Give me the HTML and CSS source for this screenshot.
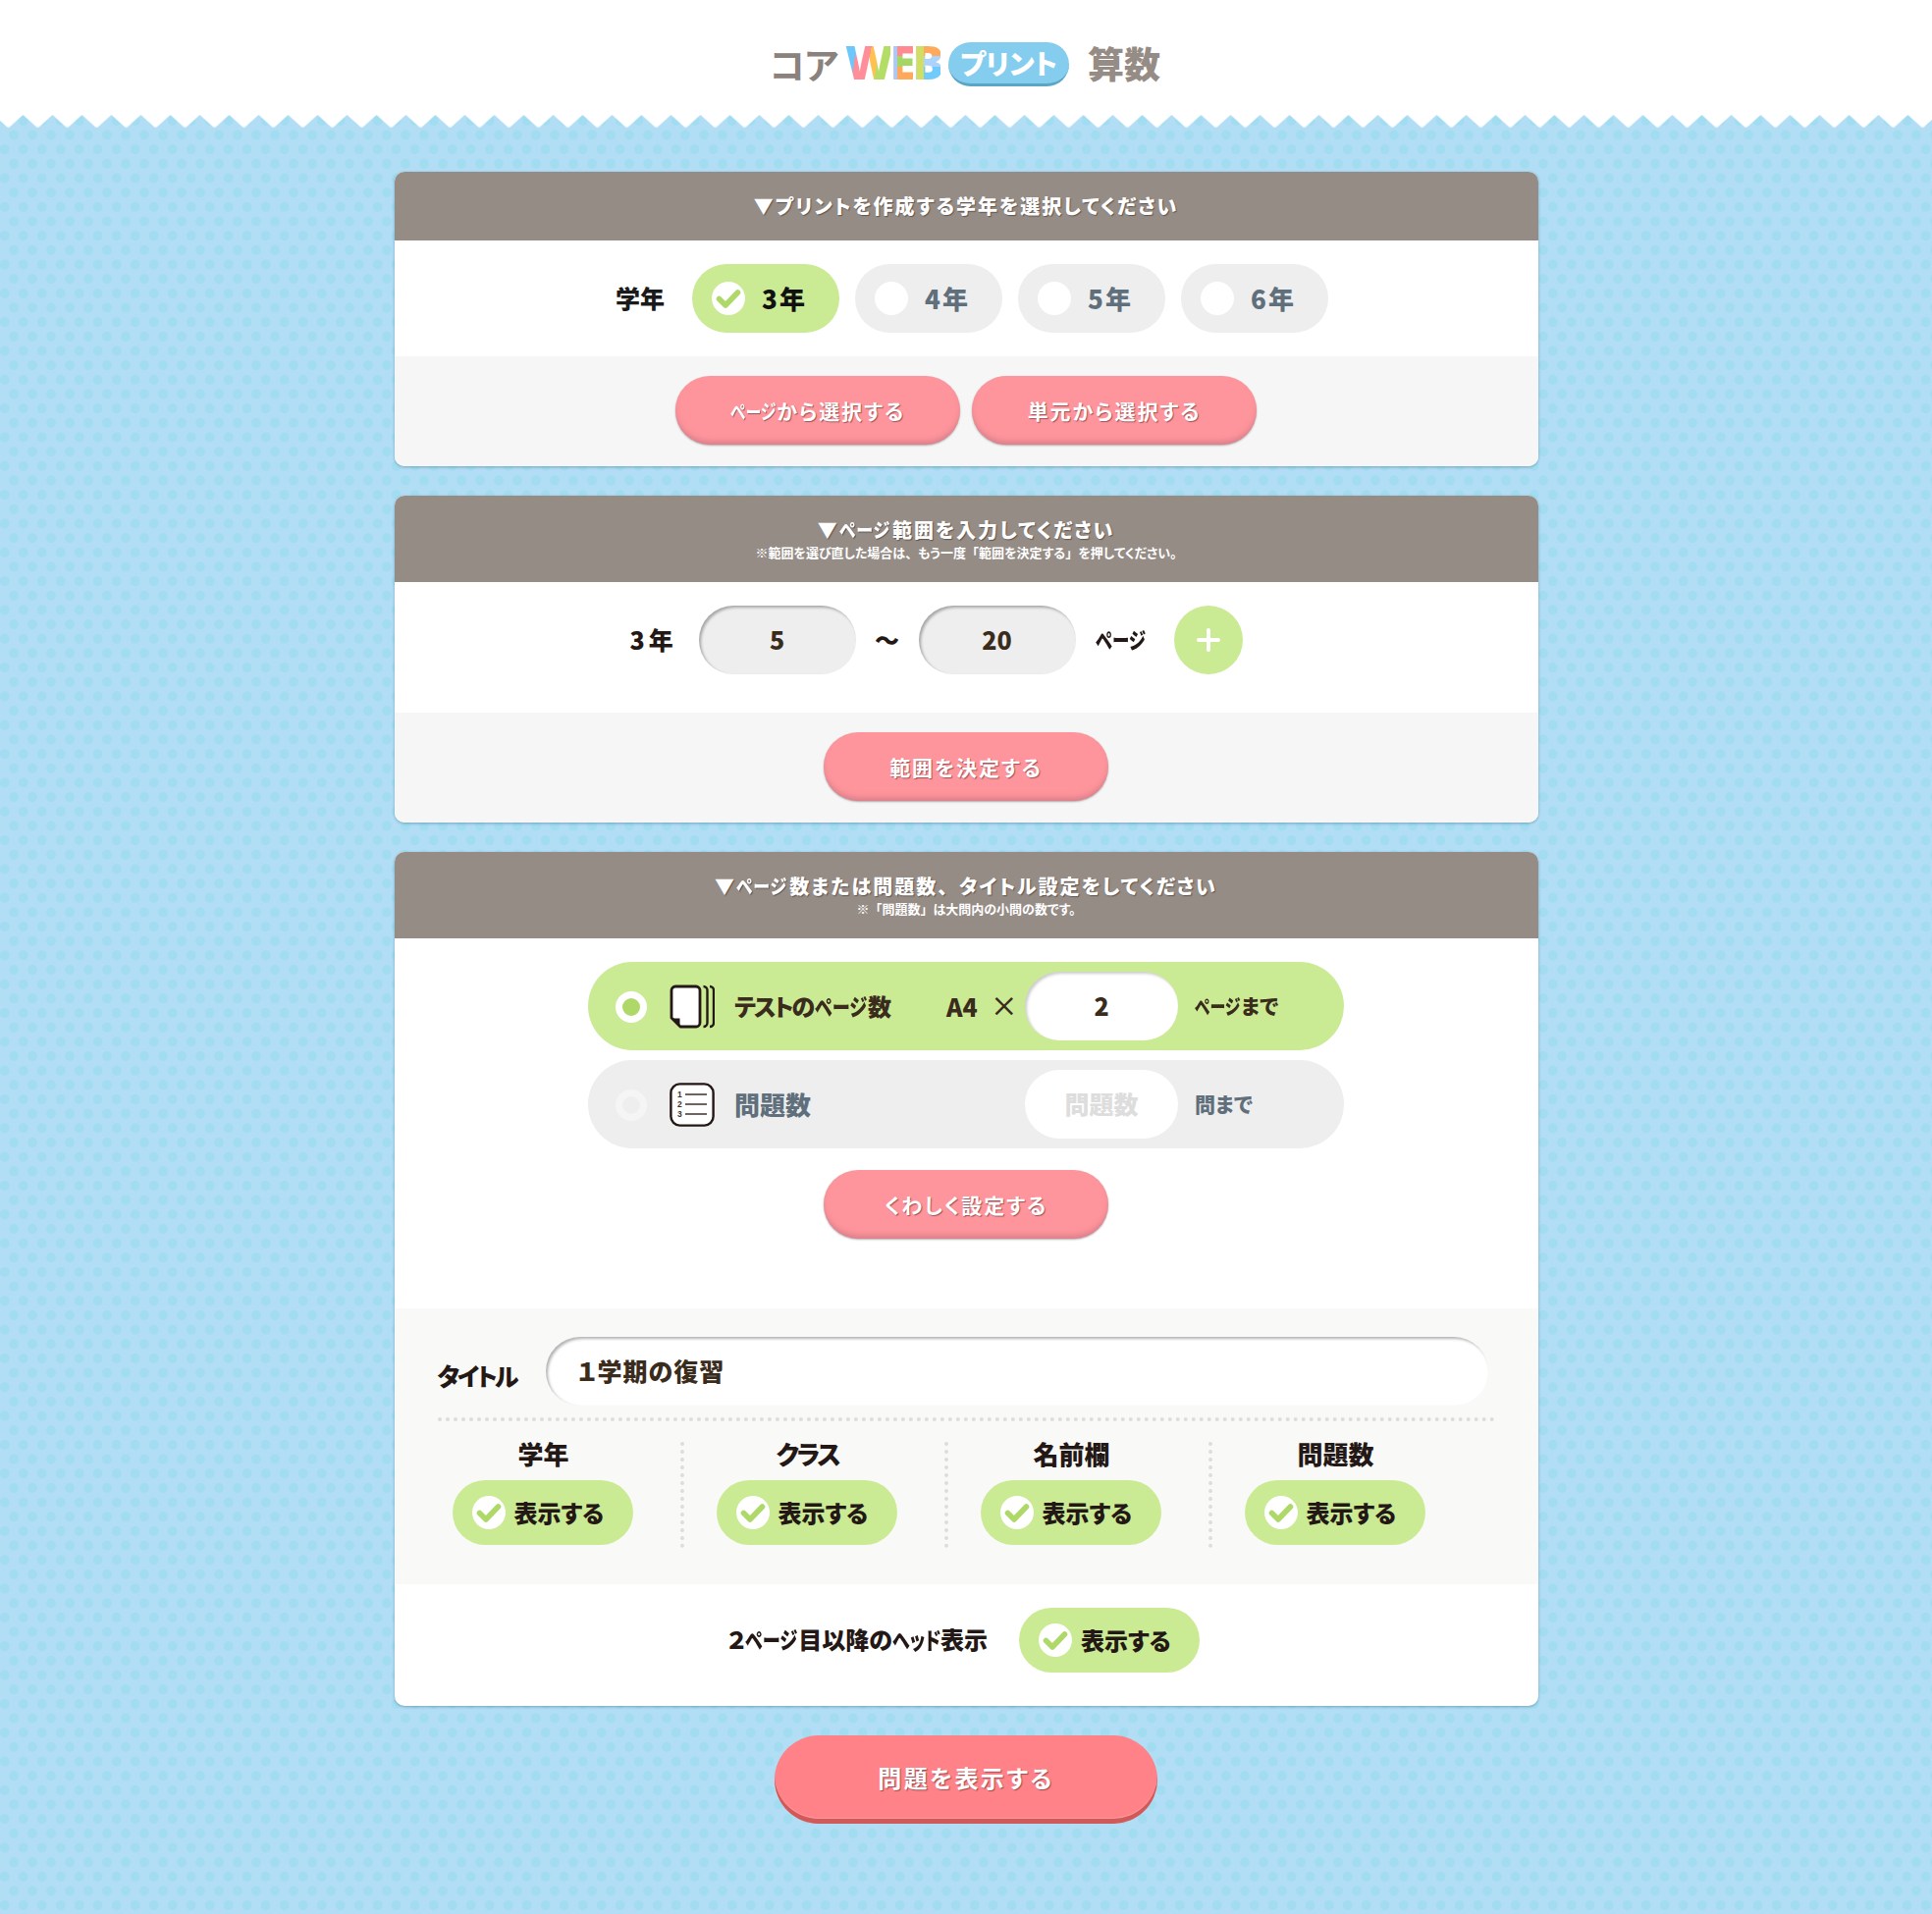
FILE: index.html
```html
<!DOCTYPE html>
<html lang="ja">
<head>
<meta charset="utf-8">
<title>コアWEBプリント 算数</title>
<link rel="stylesheet" href="styles.css">
</head>
<body>
<svg class="defs" width="0" height="0" aria-hidden="true">
  <symbol id="check" viewBox="0 0 34 34">
    <circle cx="17" cy="17" r="17" fill="#fff"/>
    <path d="M7.5 17.5 L14 24 L26.5 11" fill="none" stroke="#aed968" stroke-width="5.6" stroke-linecap="round" stroke-linejoin="round"/>
  </symbol>
</svg>

<header class="site-head">
  <div class="logo">
    <span class="logo-core">コア</span>
    <span class="logo-web"><span class="w">W</span><span class="e">E</span><span class="b">B</span></span>
    <span class="logo-print">プリント</span>
    <span class="logo-subject">算数</span>
  </div>
</header>
<svg class="zigzag" width="100%" height="13" aria-hidden="true">
  <defs>
    <pattern id="zig" x="-6.5" y="0" width="30" height="13" patternUnits="userSpaceOnUse">
      <path d="M0 0 L13.5 12.3 Q15 13.5 16.5 12.3 L30 0 Z" fill="#fff"/>
    </pattern>
  </defs>
  <rect width="100%" height="13" fill="url(#zig)"/>
</svg>

<main class="page">
  <section class="card">
    <h2 class="card-head"><span class="head-title">▼プリントを作成する学年を選択してください</span></h2>
    <div class="grade-row">
      <span class="grade-label">学年</span>
      <div class="grade on"><svg class="chk"><use href="#check"/></svg><span>3年</span></div>
      <div class="grade"><i class="blank"></i><span>4年</span></div>
      <div class="grade"><i class="blank"></i><span>5年</span></div>
      <div class="grade"><i class="blank"></i><span>6年</span></div>
    </div>
    <div class="foot-row">
      <button class="btn"><span class="nar">ページ</span>から選択する</button>
      <button class="btn">単元から選択する</button>
    </div>
  </section>

  <section class="card">
    <h2 class="card-head tall">
      <span class="head-title">▼<span class="nar">ページ</span>範囲を入力してください</span>
      <span class="head-note">※範囲を選び直した場合は<span class="full">、</span>もう一度<span class="full">「</span>範囲を決定する<span class="full">」</span>を押してください。</span>
    </h2>
    <div class="range-row">
      <span class="range-year">3年</span>
      <div class="field grey">5</div>
      <span class="tilde">〜</span>
      <div class="field grey">20</div>
      <span class="range-unit"><span class="nar">ページ</span></span>
      <div class="plus"><svg width="24" height="24" viewBox="0 0 24 24"><path d="M12 2 V22 M2 12 H22" stroke="#fff" stroke-width="4" stroke-linecap="round"/></svg></div>
    </div>
    <div class="foot-row">
      <button class="btn">範囲を決定する</button>
    </div>
  </section>

  <section class="card">
    <h2 class="card-head tall">
      <span class="head-title">▼<span class="nar">ページ</span>数または問題数<span class="full">、</span>タイトル設定をしてください</span>
      <span class="head-note">※<span class="full">「</span>問題数<span class="full">」</span>は大問内の小問の数です。</span>
    </h2>
    <div class="mode-block">
      <div class="mode on">
        <i class="radio"></i>
        <svg class="mode-icon" viewBox="0 0 46 45">
          <path d="M6 2 H27 a4 4 0 0 1 4 4 V39 a4 4 0 0 1 -4 4 H11 L2 34 V6 a4 4 0 0 1 4 -4 Z" fill="#fff" stroke="#231815" stroke-width="2.8" stroke-linejoin="round"/>
          <path d="M3 34.5 H10.5 V42 Z" fill="#231815"/>
          <path d="M34.5 2 a4 4 0 0 1 4 4 V39 a4 4 0 0 1 -4 4 M41 2 a4 4 0 0 1 4 4 V39 a4 4 0 0 1 -4 4" fill="none" stroke="#231815" stroke-width="2.4"/>
        </svg>
        <span class="mode-name"><span class="tight">テスト</span>の<span class="nar">ページ</span>数</span>
        <span class="mode-size">A4<em>×</em></span>
        <div class="field white">2</div>
        <span class="mode-unit"><span class="nar">ページ</span>まで</span>
      </div>
      <div class="mode">
        <i class="radio"></i>
        <svg class="mode-icon" viewBox="0 0 46 45">
          <rect x="1.4" y="1.4" width="43.2" height="42.2" rx="9" fill="#fff" stroke="#231815" stroke-width="2.4"/>
          <text x="8" y="15" class="num">1</text><text x="8" y="25" class="num">2</text><text x="8" y="35" class="num">3</text>
          <path d="M16 12 H38 M16 22 H38 M16 32 H38" stroke="#6e6461" stroke-width="2"/>
        </svg>
        <span class="mode-name big">問題数</span>
        <span class="mode-size"></span>
        <div class="field white ghost">問題数</div>
        <span class="mode-unit small">問まで</span>
      </div>
      <button class="btn">くわしく設定する</button>
    </div>
    <div class="title-block">
      <div class="title-row">
        <span class="title-label">タイトル</span>
        <div class="title-field">１学期の復習</div>
      </div>
      <div class="show-grid">
        <div class="show-col"><h3>学年</h3><div class="show"><svg class="chk"><use href="#check"/></svg><span>表示する</span></div></div>
        <div class="show-col"><h3><span class="tight">クラス</span></h3><div class="show"><svg class="chk"><use href="#check"/></svg><span>表示する</span></div></div>
        <div class="show-col"><h3>名前欄</h3><div class="show"><svg class="chk"><use href="#check"/></svg><span>表示する</span></div></div>
        <div class="show-col"><h3>問題数</h3><div class="show"><svg class="chk"><use href="#check"/></svg><span>表示する</span></div></div>
      </div>
    </div>
    <div class="head-row">
      <span class="head-label">２<span class="nar">ページ</span>目以降の<span class="nar">ヘッド</span>表示</span>
      <div class="show"><svg class="chk"><use href="#check"/></svg><span>表示する</span></div>
    </div>
  </section>

  <button class="btn big">問題を表示する</button>
</main>
</body>
</html>
```

FILE: styles.css
```css
* { box-sizing: border-box; }
html, body { margin: 0; padding: 0; }
body {
  min-height: 1950px;
  font-family: "Noto Sans CJK JP", "Noto Sans", sans-serif;
  font-feature-settings: "palt";
  font-weight: 700;
  color: #231815;
  background-color: #b1ddf5;
  background-image:
    radial-gradient(circle at center, #a2dcf0 4.6px, transparent 5.2px),
    radial-gradient(circle at center, #a2dcf0 4.6px, transparent 5.2px);
  background-size: 19px 29.33px;
  background-position: 4.5px 5.5px, -4.8px -9.17px;
}
.defs { position: absolute; }

/* narrow katakana, as the original rounded face sets them */
.nar {
  display: inline-block;
  transform: scaleX(.76);
  transform-origin: left center;
  margin-right: -.66em;
  letter-spacing: 0;
}
.tight { letter-spacing: -.09em; }
.full { font-feature-settings: normal; }

/* header */
.site-head {
  height: 117px;
  background: #fff;
  display: flex;
  justify-content: center;
  padding-top: 43px;
}
.logo { display: flex; align-items: flex-start; height: 45px; }
.logo-core {
  font-size: 37px; line-height: 44px; font-weight: 700; color: #8b827d; width: 75px;
  letter-spacing: -.02em; margin-left: -2px; margin-right: 2px;
}
.logo-web { display: flex; font-size: 47px; line-height: 40px; font-weight: 900; letter-spacing: -3px; width: 105px; font-family: "Noto Sans", sans-serif; }
.logo-web span { -webkit-background-clip: text; background-clip: text; color: transparent; }
.logo-web .w { background-image: linear-gradient(100deg, #6cc8fb 0 24%, #ff8d9a 24% 52%, #ffc14f 52% 68%, #b4dd66 68%); }
.logo-web .e { background-image: linear-gradient(90deg, #a9c9fb 0 30%, transparent 30%), linear-gradient(180deg, #ff8a90 0 36%, #a4d565 36% 62%, #ffa95c 62%); }
.logo-web .b { background-image: linear-gradient(90deg, #d0de66 0 40%, transparent 40%), linear-gradient(180deg, #ffa95c 0 34%, #acd3fb 34% 62%, #70cbfb 62%); }
.logo-print {
  width: 123px; height: 45px;
  background: #85cdee;
  border-bottom: 3px solid #5aa6c4;
  border-radius: 23px;
  color: #fff;
  font-size: 28px; line-height: 42px; font-weight: 900;
  text-align: center;
}
.logo-subject { margin-left: 19px; font-size: 37px; line-height: 43px; font-weight: 900; color: #968c86; letter-spacing: 0; }
.zigzag { display: block; }

/* layout */
.page {
  width: 1165px;
  margin: 45px auto 0;
  display: flex;
  flex-direction: column;
  gap: 30px;
  align-items: center;
}
.card {
  width: 100%;
  background: #fff;
  border-radius: 10px;
  box-shadow: 0 1px 3px rgba(0, 60, 90, .35);
  overflow: hidden;
}
.card-head {
  margin: 0;
  height: 70px;
  background: #968c86;
  color: #fff;
  display: flex;
  flex-direction: column;
  align-items: center;
  justify-content: center;
  text-shadow: 1px 1px 1px rgba(60, 50, 45, .6);
  font-weight: 900;
}
.card-head.tall { height: 88px; padding-bottom: 2px; }
.head-title { font-size: 20px; line-height: 30px; letter-spacing: .1em; }
.head-title .nar { transform: scaleX(.85); margin-right: -.35em; letter-spacing: .05em; }
.head-note { font-size: 13px; line-height: 16px; font-weight: 700; text-shadow: none; }

/* buttons */
.btn {
  display: block;
  width: 290px; height: 70px;
  border: 0; padding: 0;
  border-radius: 35px;
  font: inherit;
  font-feature-settings: "palt";
  font-size: 21px;
  font-weight: 700;
  letter-spacing: .09em;
  color: #fff;
  background: #ff959c;
  text-shadow: 1px 1px 1px rgba(90, 40, 45, .6);
  box-shadow: inset 0 -5px 6px -2px rgba(120, 70, 90, .3), 0 1px 2px rgba(0, 0, 0, .3);
}
.btn.big {
  width: 390px; height: 90px;
  border-radius: 45px;
  font-size: 24px;
  letter-spacing: .1em;
  background: #ff8288;
  box-shadow: inset 0 -5px 0 #d05a5a, inset 0 -6px 1px rgba(255, 255, 255, .2);
  padding-bottom: 5px;
}
.foot-row {
  height: 112px;
  background: #f6f6f6;
  padding-top: 20px;
  display: flex;
  justify-content: center;
  gap: 12px;
}

/* grade row */
.grade-row {
  height: 118px;
  display: flex;
  align-items: center;
  justify-content: center;
  gap: 16px;
  font-weight: 900;
}
.grade-label { font-size: 25px; padding-left: 12px; margin-right: 12px; color: #1a1a1a; padding-bottom: 2px; }
.grade {
  width: 150px; height: 70px;
  border-radius: 35px;
  background: #eee;
  display: flex;
  align-items: center;
  padding-left: 20px;
  gap: 17px;
  font-size: 26px;
  letter-spacing: .08em;
  color: #5f6f7c;
}
.grade span { padding-bottom: 2px; }
.grade.on { background: #cbea94; color: #111; }
.chk { width: 34px; height: 34px; flex: none; }
.blank { width: 34px; height: 34px; background: #fff; border-radius: 50%; flex: none; }

/* range */
.range-row {
  height: 133px;
  padding: 24px 0 0 240px;
  display: flex;
  align-items: flex-start;
  font-weight: 900;
}
.range-year, .range-unit, .tilde { height: 70px; line-height: 68px; font-size: 25px; }
.range-year { width: 70px; letter-spacing: .16em; }
.tilde { width: 64px; text-align: center; }
.range-unit { width: 80px; margin-left: 20px; font-size: 23px; }
.field {
  width: 160px; height: 70px;
  border-radius: 35px;
  text-align: center;
  font-size: 25px;
  line-height: 68px;
  color: #3a2c1c;
}
.field.grey { background: #eee; box-shadow: inset 2px 2px 3px rgba(0, 0, 0, .3); }
.field.white { width: 156px; background: #fff; box-shadow: inset 2px 2px 3px rgba(0, 0, 0, .2); }
.field.ghost { color: #ddd; box-shadow: none; }
.plus {
  width: 70px; height: 70px;
  background: #cbea94;
  border-radius: 50%;
  display: flex; align-items: center; justify-content: center;
}

/* mode */
.mode-block {
  height: 377px;
  padding-top: 24px;
  display: flex;
  flex-direction: column;
  align-items: center;
  gap: 10px;
}
.mode-block .btn { margin-top: 12px; }
.mode {
  width: 770px; height: 90px;
  border-radius: 45px;
  background: #eee;
  display: flex;
  align-items: center;
  padding-left: 28px;
  color: #5f6f7c;
  font-size: 24px;
  font-weight: 900;
}
.mode.on { background: #cbea94; color: #3a2c1c; }
.radio {
  width: 32px; height: 32px;
  border-radius: 50%;
  border: 7px solid #f5f5f5;
  background: #eee;
  flex: none;
  margin-top: 2px;
}
.mode.on .radio { border-color: #fff; background: #aed968; }
.mode-icon { width: 46px; height: 45px; margin-left: 23px; flex: none; }
.num { font-family: "Liberation Sans", sans-serif; font-size: 8.5px; font-weight: 700; fill: #3a3330; }
.mode-name { width: 216px; margin-left: 20px; flex: none; padding-bottom: 2px; }
.mode-name.big { font-size: 26px; }
.mode-size { width: 80px; flex: none; font-size: 25px; padding-bottom: 2px; }
.mode-size em { font-style: normal; font-weight: 500; font-size: 28px; margin-left: 13px; }
.mode-unit { margin-left: 17px; font-size: 21px; padding-bottom: 2px; }
.mode-unit.small { font-size: 21px; }

/* title */
.title-block {
  height: 281px;
  background: #f9f9f7;
  padding: 29px 44px 0;
  font-weight: 900;
}
.title-row {
  height: 86px;
  display: flex;
  align-items: flex-start;
  border-bottom: 4px dotted #ddd;
}
.title-label { width: 110px; font-size: 25px; line-height: 78px; letter-spacing: -.1em; }
.title-field {
  width: 960px; height: 70px;
  background: #fff;
  border-radius: 35px;
  box-shadow: inset 2px 2px 3px rgba(0, 0, 0, .3);
  padding-left: 33px;
  font-size: 25px;
  line-height: 68px;
  letter-spacing: .04em;
  color: #3a2c1c;
}
.show-grid { display: flex; margin-top: 21px; }
.show-col {
  width: 251px;
  margin-right: 18px;
  height: 108px;
  padding: 0 46px 0 15px;
  border-right: 4px dotted #ddd;
}
.show-col:last-child { border-right-color: transparent; }
.show-col h3 { margin: 0; height: 39px; font-size: 26px; line-height: 24px; text-align: center; font-weight: 900; }
.show {
  width: 184px; height: 66px;
  border-radius: 33px;
  background: #cbea94;
  display: flex;
  align-items: center;
  padding-left: 20px;
  gap: 9px;
  font-size: 24px;
  font-weight: 900;
  letter-spacing: 0;
}
.show span { padding-bottom: 2px; }
.head-row {
  height: 124px;
  padding: 24px 5px 0 0;
  display: flex;
  justify-content: center;
  align-items: flex-start;
  gap: 32px;
  font-weight: 900;
}
.head-label { font-size: 24px; line-height: 64px; white-space: nowrap; }
```
